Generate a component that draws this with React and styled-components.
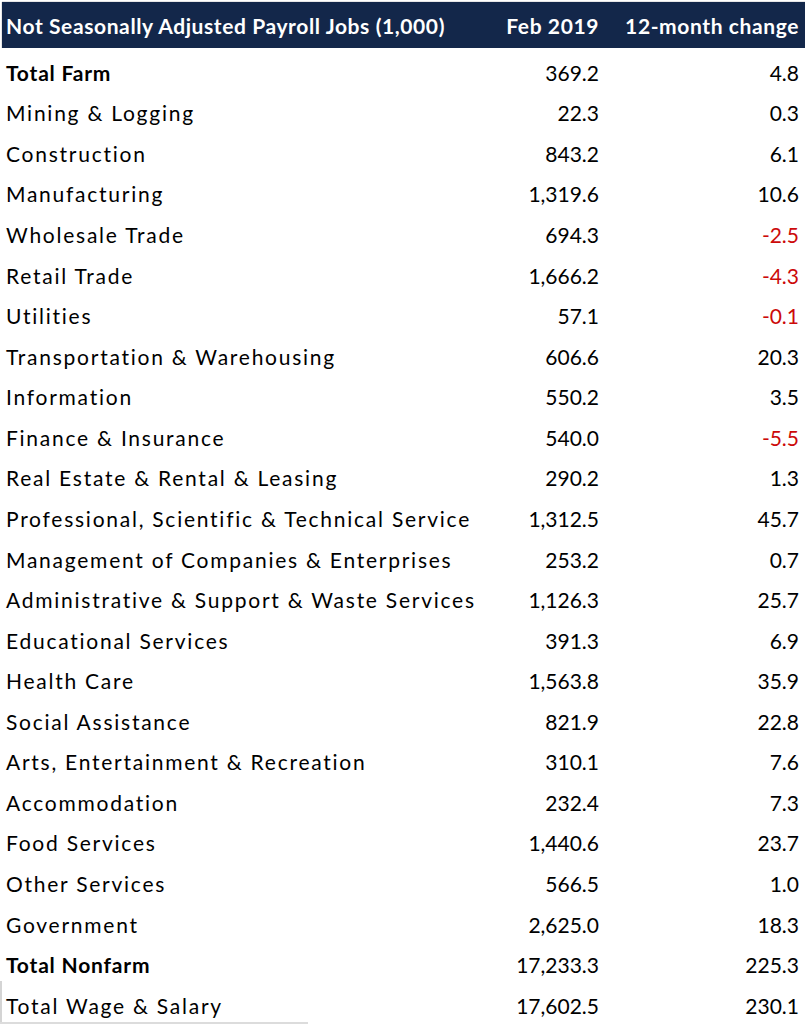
import styled, { createGlobalStyle, css } from 'styled-components';

const GlobalStyle = createGlobalStyle`
  html, body {
    margin: 0;
    padding: 0;
    background: #ffffff;
  }
  body {
    font-family: Lato, "Open Sans", "Liberation Sans", sans-serif;
    color: #000000;
  }
`;

const ROWS = [
  { label: 'Total Farm', value: '369.2', change: '4.8', bold: true },
  { label: 'Mining & Logging', value: '22.3', change: '0.3' },
  { label: 'Construction', value: '843.2', change: '6.1' },
  { label: 'Manufacturing', value: '1,319.6', change: '10.6' },
  { label: 'Wholesale Trade', value: '694.3', change: '-2.5' },
  { label: 'Retail Trade', value: '1,666.2', change: '-4.3' },
  { label: 'Utilities', value: '57.1', change: '-0.1' },
  { label: 'Transportation & Warehousing', value: '606.6', change: '20.3' },
  { label: 'Information', value: '550.2', change: '3.5' },
  { label: 'Finance & Insurance', value: '540.0', change: '-5.5' },
  { label: 'Real Estate & Rental & Leasing', value: '290.2', change: '1.3' },
  { label: 'Professional, Scientific & Technical Service', value: '1,312.5', change: '45.7' },
  { label: 'Management of Companies & Enterprises', value: '253.2', change: '0.7' },
  { label: 'Administrative & Support & Waste Services', value: '1,126.3', change: '25.7' },
  { label: 'Educational Services', value: '391.3', change: '6.9' },
  { label: 'Health Care', value: '1,563.8', change: '35.9' },
  { label: 'Social Assistance', value: '821.9', change: '22.8' },
  { label: 'Arts, Entertainment & Recreation', value: '310.1', change: '7.6' },
  { label: 'Accommodation', value: '232.4', change: '7.3' },
  { label: 'Food Services', value: '1,440.6', change: '23.7' },
  { label: 'Other Services', value: '566.5', change: '1.0' },
  { label: 'Government', value: '2,625.0', change: '18.3' },
  { label: 'Total Nonfarm', value: '17,233.3', change: '225.3', bold: true },
  { label: 'Total Wage & Salary', value: '17,602.5', change: '230.1', last: true },
];

const Page = styled.div`
  width: 805px;
  height: 1024px;
  overflow: hidden;
  padding: 2px 0 0 2px;
  box-sizing: border-box;
`;

const Table = styled.div`
  display: grid;
  grid-template-columns: 1fr 120px 200px;
`;

const Row = styled.div`
  display: contents;
`;

const HeaderCell = styled.div`
  background: #13274a;
  color: #ffffff;
  font-weight: 700;
  font-size: 21px;
  letter-spacing: 0.6px;
  height: 46px;
  display: flex;
  align-items: center;
  justify-content: ${(p) => (p.right ? 'flex-end' : 'flex-start')};
  padding: 0 ${(p) => (p.right ? '6px' : '0')} 0 ${(p) => (p.right ? '0' : '4px')};
  box-shadow: ${(p) => (p.right ? '0 -1px 0 #e6e6e6' : '0 -1px 0 #e6e6e6, -1px 0 0 #e6e6e6')};
  white-space: nowrap;
`;

const Cell = styled.div`
  position: relative;
  height: 40.57px;
  display: flex;
  align-items: center;
  padding-top: 8px;
  box-sizing: border-box;
  font-size: 21px;
  white-space: nowrap;
`;

const LabelCell = styled(Cell)`
  padding-left: 4px;
  letter-spacing: ${(p) => (p.bold ? '0.8px' : '1.75px')};
  font-weight: ${(p) => (p.bold ? 700 : 400)};
  ${(p) =>
    p.last &&
    css`
      border-left: 2px solid #d4d4d4;
      margin-left: -2px;
      &::after {
        content: '';
        position: absolute;
        left: -2px;
        bottom: -2px;
        width: 308px;
        height: 2px;
        background: #dcdcdc;
      }
    `}
`;

const NumberCell = styled(Cell)`
  justify-content: flex-end;
  padding-right: 6px;
  color: ${(p) => (p.negative ? '#cc0a0a' : '#000000')};
`;

export default function App() {
  return (
    <>
      <GlobalStyle />
      <Page>
        <Table>
          <Row>
            <HeaderCell>Not Seasonally Adjusted Payroll Jobs (1,000)</HeaderCell>
            <HeaderCell right>Feb 2019</HeaderCell>
            <HeaderCell right>12-month change</HeaderCell>
          </Row>
          {ROWS.map((row) => (
            <Row key={row.label}>
              <LabelCell bold={row.bold} last={row.last}>
                {row.label}
              </LabelCell>
              <NumberCell>{row.value}</NumberCell>
              <NumberCell negative={row.change.startsWith('-')}>{row.change}</NumberCell>
            </Row>
          ))}
        </Table>
      </Page>
    </>
  );
}
